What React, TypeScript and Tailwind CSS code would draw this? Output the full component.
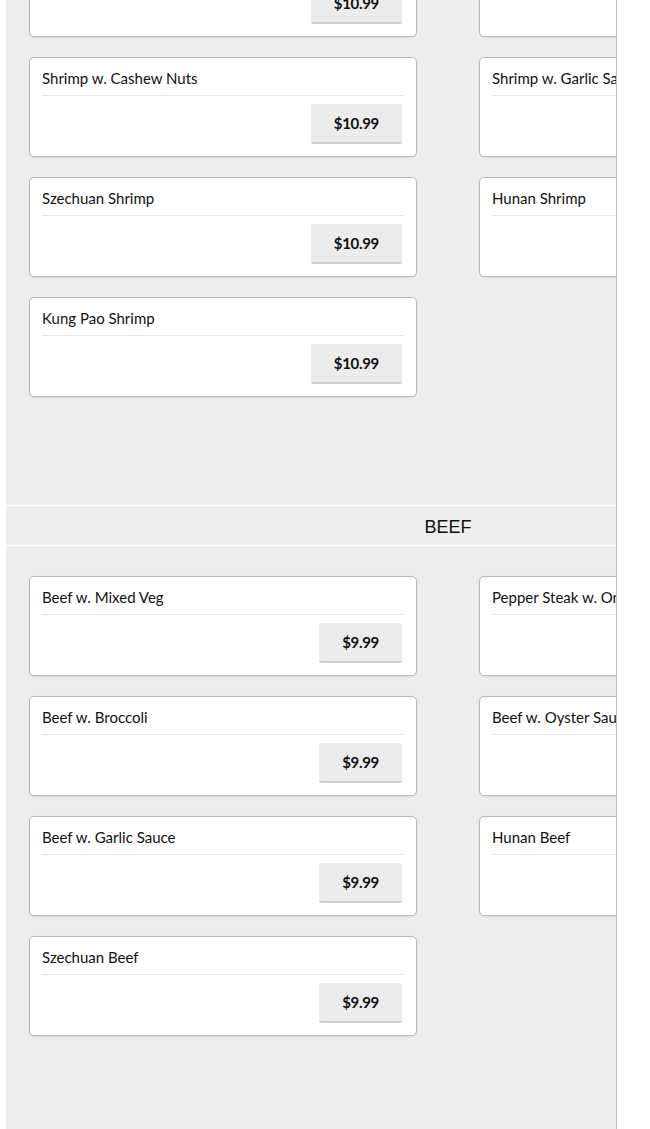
import React from 'react';

interface MenuItem {
  name: string;
  price: string;
}

const shrimp: MenuItem[] = [
  { name: 'Shrimp w. Lobster Sauce', price: '$10.99' },
  { name: 'Shrimp w. Broccoli', price: '$10.99' },
  { name: 'Shrimp w. Cashew Nuts', price: '$10.99' },
  { name: 'Shrimp w. Garlic Sauce', price: '$10.99' },
  { name: 'Szechuan Shrimp', price: '$10.99' },
  { name: 'Hunan Shrimp', price: '$10.99' },
  { name: 'Kung Pao Shrimp', price: '$10.99' },
];

const beef: MenuItem[] = [
  { name: 'Beef w. Mixed Veg', price: '$9.99' },
  { name: 'Pepper Steak w. Onion', price: '$9.99' },
  { name: 'Beef w. Broccoli', price: '$9.99' },
  { name: 'Beef w. Oyster Sauce', price: '$9.99' },
  { name: 'Beef w. Garlic Sauce', price: '$9.99' },
  { name: 'Hunan Beef', price: '$9.99' },
  { name: 'Szechuan Beef', price: '$9.99' },
];

function ItemCard({ item }: { item: MenuItem }) {
  return (
    <div className="h-[100px] bg-white border border-[#b9b9b9] rounded-[5px] shadow-[0_1px_2px_rgba(0,0,0,0.08)] px-3 pt-[10px] flex flex-col">
      <div className="h-[28px] border-b border-[#e6e6e6] text-[15px] leading-[20px] text-[#111] whitespace-nowrap overflow-hidden">
        {item.name}
      </div>
      <div className="flex justify-end pt-[8px]">
        <button className="h-[40px] px-[23px] mr-[2px] bg-[#ececec] border-b-2 border-[#cfcfcf] rounded-[2px] text-[15px] font-bold text-[#111] tracking-[-0.3px]">
          {item.price}
        </button>
      </div>
    </div>
  );
}

function ItemGrid({ items }: { items: MenuItem[] }) {
  return (
    <div className="grid grid-cols-[388px_388px] gap-x-[62px] gap-y-5 px-[23px]">
      {items.map((item) => (
        <ItemCard key={item.name} item={item} />
      ))}
    </div>
  );
}

export default function App() {
  return (
    <div className="min-h-[1129px] bg-white pl-[6px]" style={{ fontFamily: 'Lato, "Open Sans", sans-serif' }}>
      <div className="w-[611px] h-[1129px] overflow-hidden bg-[#ededed] border-r border-[#bdbdbd]">
        <div className="w-[884px] -mt-[63px]">
          {/* Shrimp */}
          <ItemGrid items={shrimp} />

          {/* Beef header */}
          <div className="mt-[108px] h-[41px] border-y border-white flex items-center justify-center pt-[3px]">
            <h2 className="text-[18px] text-[#111]" style={{ fontFamily: '"Liberation Sans", Arial, sans-serif' }}>
              BEEF
            </h2>
          </div>

          {/* Beef */}
          <div className="pt-[30px]">
            <ItemGrid items={beef} />
          </div>
        </div>
      </div>
    </div>
  );
}
